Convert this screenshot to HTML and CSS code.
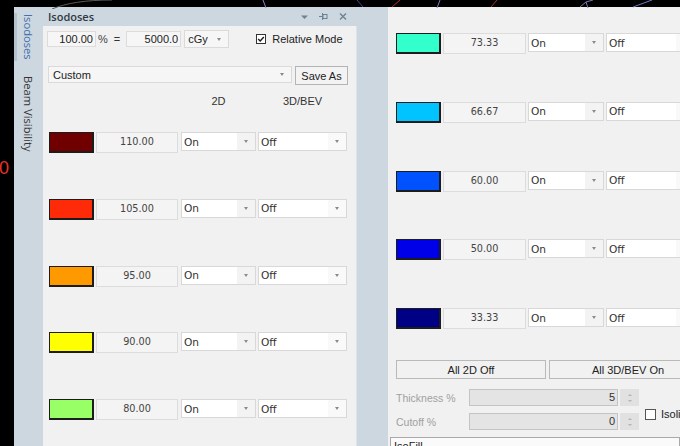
FILE: index.html
```html
<!DOCTYPE html>
<html lang="en">
<head>
<meta charset="utf-8">
<title>Isodoses</title>
<link rel="stylesheet" href="styles.css">
</head>
<body>
<!-- 3D view behind the docked panels: only a sliver of contour lines shows above them -->
<svg class="scene" width="680" height="9" viewBox="0 0 680 9">
  <path d="M52 9 C66 3 86 0 112 0" stroke="#595959" fill="none" stroke-width="1"/>
  <path d="M263 0 L266 8" stroke="#8d88cc" fill="none" stroke-width="1"/>
  <path d="M357 0 L363 7" stroke="#3c4a8a" fill="none" stroke-width="1"/>
  <path d="M392 7 L400 0" stroke="#b02a2a" fill="none" stroke-width="1"/>
  <path d="M437 8 L440 0" stroke="#7f7fc0" fill="none" stroke-width="1"/>
  <path d="M491 7 L497 0" stroke="#b02a2a" fill="none" stroke-width="1"/>
  <path d="M580 7 L586 2 L593 0 M586 2 L588 8" stroke="#7a7ab5" fill="none" stroke-width="1"/>
  <path d="M633 7 L652 0" stroke="#6b78c8" fill="none" stroke-width="1"/>
</svg>

<div class="app">
  <div class="gutter"><span class="ruler-mark">0</span></div>

  <nav class="tabs">
    <div class="tab active">Isodoses</div>
    <div class="tab">Beam Visibility</div>
  </nav>

  <section class="panel">
    <header class="titlebar">
      <span class="title">Isodoses</span>
      <svg class="tools" width="48" height="19" viewBox="0 0 48 19">
        <path d="M1 8.5 L8 8.5 L4.5 12 Z" fill="#6f8294"/>
        <path d="M19 9.5 H22.5 M22.5 6 V13" stroke="#6f8294" stroke-width="1" fill="none"/>
        <rect x="23" y="7.5" width="4" height="4" stroke="#6f8294" stroke-width="1" fill="none"/>
        <path d="M40 6.5 L46 12.5 M46 6.5 L40 12.5" stroke="#6f8294" stroke-width="1.4" fill="none"/>
      </svg>
    </header>

    <div class="panel-body">
      <div class="ref-row">
        <span class="field w-pct">100.00</span>
        <span class="unit">%</span>
        <span class="eq">=</span>
        <span class="field w-dose">5000.0</span>
        <span class="combo combo-unit">cGy<i class="caret"></i></span>
        <label class="check">
          <svg class="box" width="10" height="10" viewBox="0 0 10 10">
            <rect x="0.5" y="0.5" width="9" height="9" fill="#fff" stroke="#333"/>
            <path d="M2.2 5 L4.2 7 L7.8 3" stroke="#1a1a1a" stroke-width="1.4" fill="none"/>
          </svg>
          <span>Relative Mode</span>
        </label>
      </div>

      <div class="preset-row">
        <span class="combo preset">Custom<i class="caret"></i></span>
        <button class="btn save">Save As</button>
      </div>

      <div class="col-heads">
        <span class="h-2d">2D</span>
        <span class="h-3d">3D/BEV</span>
      </div>

      <div class="levels">
        <div class="level">
          <span class="swatch c110"></span><span class="value">110.00</span>
          <span class="dd on">On<i class="drop"><i class="caret"></i></i></span>
          <span class="dd off">Off<i class="drop"><i class="caret"></i></i></span>
        </div>
        <div class="level">
          <span class="swatch c105"></span><span class="value">105.00</span>
          <span class="dd on">On<i class="drop"><i class="caret"></i></i></span>
          <span class="dd off">Off<i class="drop"><i class="caret"></i></i></span>
        </div>
        <div class="level">
          <span class="swatch c95"></span><span class="value">95.00</span>
          <span class="dd on">On<i class="drop"><i class="caret"></i></i></span>
          <span class="dd off">Off<i class="drop"><i class="caret"></i></i></span>
        </div>
        <div class="level">
          <span class="swatch c90"></span><span class="value">90.00</span>
          <span class="dd on">On<i class="drop"><i class="caret"></i></i></span>
          <span class="dd off">Off<i class="drop"><i class="caret"></i></i></span>
        </div>
        <div class="level">
          <span class="swatch c80"></span><span class="value">80.00</span>
          <span class="dd on">On<i class="drop"><i class="caret"></i></i></span>
          <span class="dd off">Off<i class="drop"><i class="caret"></i></i></span>
        </div>
      </div>
    </div>
  </section>

  <div class="divider"></div>

  <section class="panel-right">
    <div class="levels levels-right">
      <div class="level">
        <span class="swatch c73"></span><span class="value">73.33</span>
        <span class="dd on">On<i class="drop"><i class="caret"></i></i></span>
        <span class="dd off">Off<i class="drop"><i class="caret"></i></i></span>
      </div>
      <div class="level">
        <span class="swatch c66"></span><span class="value">66.67</span>
        <span class="dd on">On<i class="drop"><i class="caret"></i></i></span>
        <span class="dd off">Off<i class="drop"><i class="caret"></i></i></span>
      </div>
      <div class="level">
        <span class="swatch c60"></span><span class="value">60.00</span>
        <span class="dd on">On<i class="drop"><i class="caret"></i></i></span>
        <span class="dd off">Off<i class="drop"><i class="caret"></i></i></span>
      </div>
      <div class="level">
        <span class="swatch c50"></span><span class="value">50.00</span>
        <span class="dd on">On<i class="drop"><i class="caret"></i></i></span>
        <span class="dd off">Off<i class="drop"><i class="caret"></i></i></span>
      </div>
      <div class="level">
        <span class="swatch c33"></span><span class="value">33.33</span>
        <span class="dd on">On<i class="drop"><i class="caret"></i></i></span>
        <span class="dd off">Off<i class="drop"><i class="caret"></i></i></span>
      </div>
    </div>

    <div class="all-row">
      <button class="btn all-2d">All 2D Off</button>
      <button class="btn all-3d">All 3D/BEV On</button>
    </div>

    <div class="fill-opts">
      <div class="spins">
        <div class="spin-row">
          <span class="lbl">Thickness %</span>
          <span class="num-in">5</span>
          <span class="spinner"><i class="up"></i><i class="down"></i></span>
        </div>
        <div class="spin-row">
          <span class="lbl">Cutoff %</span>
          <span class="num-in">0</span>
          <span class="spinner"><i class="up"></i><i class="down"></i></span>
        </div>
      </div>
      <label class="check iso">
        <span class="plain-box"></span>
        <span>Isolines</span>
      </label>
    </div>

    <div class="isofill">IsoFill</div>
  </section>
</div>
</body>
</html>
```

FILE: styles.css
```css
* {
  box-sizing: border-box;
}

html,
body {
  margin: 0;
  padding: 0;
}

body {
  width: 680px;
  height: 446px;
  overflow: hidden;
  position: relative;
  background: #000;
  font-family: "Liberation Sans", Arial, sans-serif;
  font-size: 11px;
  color: #222;
}

/* contour lines of the 3D view, peeking out above the docked panels */
.scene {
  position: absolute;
  left: 0;
  top: 0;
}

.app {
  display: flex;
  height: 446px;
  padding-top: 7px;
}

/* strip of the dose view left of the dock */
.gutter {
  width: 14px;
  flex: none;
  padding-top: 151px;
  overflow: hidden;
}

.ruler-mark {
  display: block;
  margin-left: -1px;
  font-size: 18px;
  line-height: 21px;
  color: #e6332b;
}

/* vertical dock tabs */
.tabs {
  width: 29px;
  flex: none;
  display: flex;
  flex-direction: column;
  padding-top: 6px;
  background: #cdd7df;
}

.tab {
  writing-mode: vertical-rl;
  line-height: 29px;
  padding: 1px 0;
  font-family: "Open Sans", "Noto Sans", sans-serif;
  font-size: 11.2px;
  color: #333;
}

.tab.active {
  color: #3e6fae;
  box-shadow: inset 3px 0 #b2c2cf;
}

.tab + .tab {
  margin-top: 14px;
}

/* Isodoses dock panel */
.panel {
  width: 314px;
  flex: none;
  display: flex;
  flex-direction: column;
}

.titlebar {
  height: 19px;
  flex: none;
  display: flex;
  align-items: center;
  justify-content: space-between;
  padding: 0 9px 0 5px;
  background: #cdd7df;
}

.title {
  font-family: "Open Sans", "Noto Sans", sans-serif;
  font-size: 11px;
  font-weight: 600;
  color: #2f3a44;
}

.tools {
  display: block;
}

.panel-body {
  flex: 1;
  padding-left: 4px;
  background: #f1f1f1;
  border-right: 1px solid #dde3e8;
}

.ref-row {
  display: flex;
  align-items: center;
  height: 18px;
  margin-top: 4px;
}

.field {
  height: 16px;
  padding-right: 2px;
  line-height: 14px;
  text-align: right;
  background: #f6f6f6;
  border: 1px solid #dcdcdc;
  color: #222;
}

.w-pct {
  width: 49px;
}

.w-dose {
  width: 55px;
  margin-left: 6px;
}

.unit {
  margin-left: 2px;
  color: #444;
}

.eq {
  margin-left: 6px;
  color: #333;
}

.combo {
  display: flex;
  align-items: center;
  justify-content: space-between;
  background: #f6f6f6;
  border: 1px solid #dadada;
  color: #222;
}

.combo-unit {
  width: 45px;
  height: 18px;
  margin-left: 3px;
  padding: 0 7px 0 3px;
}

.caret {
  display: block;
  width: 0;
  height: 0;
  border-left: 2.5px solid transparent;
  border-right: 2.5px solid transparent;
  border-top: 3px solid #8a8a8a;
}

.check {
  display: flex;
  align-items: center;
}

.ref-row .check {
  margin-left: 27px;
}

.check .box {
  display: block;
  margin-right: 6px;
}

.preset-row {
  display: flex;
  align-items: flex-start;
  height: 19px;
  margin-top: 18px;
}

.preset {
  width: 244px;
  height: 17px;
  margin-left: 1px;
  padding: 0 7px 0 4px;
}

.btn {
  display: block;
  margin: 0;
  padding: 0;
  font: inherit;
  color: #222;
  background: #f3f3f3;
  border: 1px solid #b4b4b4;
  border-radius: 0;
}

.save {
  width: 53px;
  height: 19px;
  margin-left: 3px;
}

.col-heads {
  display: flex;
  height: 13px;
  margin-top: 10px;
  line-height: 13px;
  color: #333;
}

.h-2d {
  width: 75px;
  margin-left: 134px;
  text-align: center;
}

.h-3d {
  width: 89px;
  margin-left: 2px;
  text-align: center;
}

/* isodose level rows */
.levels {
  display: flex;
  flex-direction: column;
  gap: 45.75px;
  margin-top: 24px;
  padding-left: 2px;
}

.level {
  display: flex;
  align-items: flex-start;
  height: 21px;
}

.swatch {
  width: 45px;
  height: 21px;
  flex: none;
  border: 1px solid #1c1c1c;
  border-right-width: 2px;
  border-bottom-width: 2px;
}

.c110 { background: #700000; }
.c105 { background: #ff2a08; }
.c95  { background: #ff9900; }
.c90  { background: #ffff00; }
.c80  { background: #99ff66; }
.c73  { background: #33ffcc; }
.c66  { background: #00c3ff; }
.c60  { background: #0052ff; }
.c50  { background: #0000e8; }
.c33  { background: #000084; }

.value {
  width: 82px;
  height: 21px;
  flex: none;
  margin-left: 2px;
  font-family: "DejaVu Sans", Verdana, sans-serif;
  font-size: 9.7px;
  line-height: 17px;
  text-align: center;
  color: #444;
  background: #f4f4f4;
  border: 1px solid #dcdcdc;
}

.dd {
  display: flex;
  align-items: center;
  justify-content: space-between;
  height: 19px;
  flex: none;
  padding-left: 2px;
  font-family: "DejaVu Sans", Verdana, sans-serif;
  font-size: 10.6px;
  color: #333;
  background: #fff;
  border: 1px solid #d8d8d8;
}

.dd.on {
  width: 75px;
  margin-left: 3px;
}

.dd.off {
  width: 89px;
  margin-left: 2px;
}

.drop {
  display: flex;
  align-items: center;
  justify-content: center;
  width: 18px;
  height: 17px;
  background: #f3f3f3;
}

.dd.off .drop {
  background: #f9f9f9;
}

.divider {
  width: 31px;
  flex: none;
  background: #cdd7df;
}

/* right part of the isodose list */
.panel-right {
  flex: 1;
  min-width: 0;
  padding: 26px 0 0 8px;
  background: #f1f1f1;
  overflow: hidden;
}

.levels-right {
  gap: 47.75px;
  margin-top: 0;
  padding-left: 0;
}

.levels-right .value {
  width: 83px;
}

.levels-right .dd.on {
  width: 76px;
  margin-left: 2px;
}

.all-row {
  display: flex;
  margin-top: 31px;
}

.all-row .btn {
  height: 19px;
  flex: none;
  background: #f1f1f1;
  border-color: #b9b9b9;
}

.all-2d {
  width: 150px;
}

.all-3d {
  width: 158px;
  margin-left: 3px;
}

.fill-opts {
  display: flex;
  margin-top: 10px;
}

.spins {
  display: flex;
  flex-direction: column;
  gap: 7px;
}

.spin-row {
  display: flex;
  align-items: center;
  height: 17px;
}

.lbl {
  width: 73px;
  font-size: 10.5px;
  color: #a0a0a0;
}

.num-in {
  width: 149px;
  height: 17px;
  padding-right: 2px;
  line-height: 15px;
  text-align: right;
  color: #333;
  background: #e4e4e4;
  border: 1px solid #c4c4c4;
}

.spinner {
  display: flex;
  flex-direction: column;
  align-items: center;
  justify-content: center;
  gap: 4px;
  width: 19px;
  height: 17px;
  margin-left: 2px;
  background: #e1e1e1;
}

.spinner i {
  display: block;
  width: 0;
  height: 0;
  border-left: 2px solid transparent;
  border-right: 2px solid transparent;
}

.spinner .up {
  border-bottom: 2px solid #b4b4b4;
}

.spinner .down {
  border-top: 2px solid #b4b4b4;
}

.check.iso {
  align-self: flex-start;
  margin-top: 19px;
  margin-left: 6px;
  white-space: nowrap;
  color: #222;
}

.plain-box {
  display: block;
  width: 11px;
  height: 11px;
  margin-right: 5px;
  background: #fff;
  border: 1px solid #555;
}

.isofill {
  height: 30px;
  margin: 7px 0 0 -6px;
  padding: 2px 0 0 3px;
  color: #222;
  background: #fafafa;
  border: 1px solid #a9a9a9;
}
```
